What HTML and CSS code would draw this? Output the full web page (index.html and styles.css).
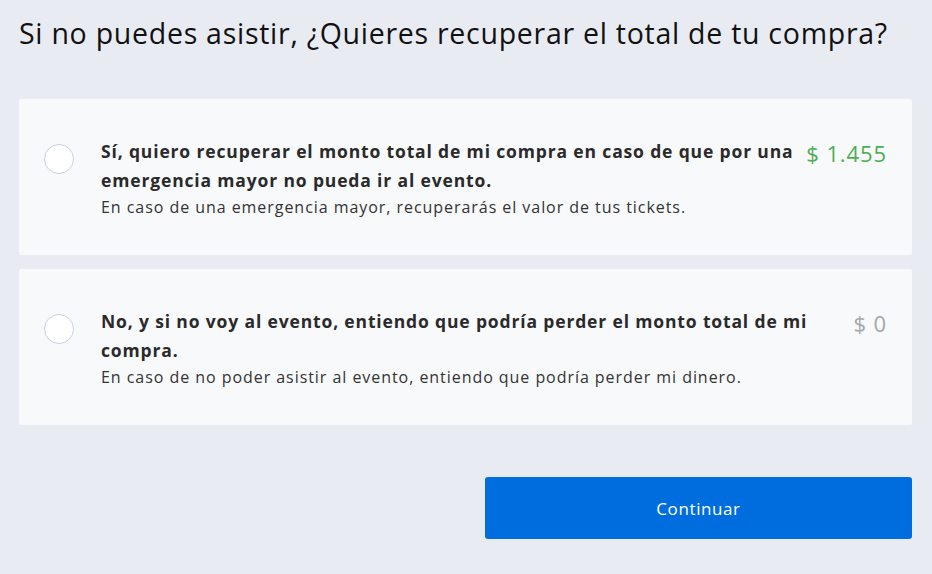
FILE: index.html
```html
<!DOCTYPE html>
<html lang="es">
<head>
<meta charset="utf-8">
<link rel="stylesheet" href="styles.css">
</head>
<body>
<main class="page">
  <h1 class="title">Si no puedes asistir, ¿Quieres recuperar el total de tu compra?</h1>
  <div class="options">
    <label class="option">
      <span class="radio"></span>
      <span class="texts">
        <span class="main">Sí, quiero recuperar el monto total de mi compra en caso de que por una emergencia mayor no pueda ir al evento.</span>
        <span class="sub">En caso de una emergencia mayor, recuperarás el valor de tus tickets.</span>
      </span>
      <span class="price green">$ 1.455</span>
    </label>
    <label class="option">
      <span class="radio"></span>
      <span class="texts">
        <span class="main">No, y si no voy al evento, entiendo que podría perder el monto total de mi compra.</span>
        <span class="sub">En caso de no poder asistir al evento, entiendo que podría perder mi dinero.</span>
      </span>
      <span class="price grey">$ 0</span>
    </label>
  </div>
  <div class="actions">
    <button class="btn">Continuar</button>
  </div>
</main>
</body>
</html>
```
FILE: styles.css
```css
html, body {
  margin: 0;
  padding: 0;
  background: #e8ebf2;
}
body {
  font-family: "Open Sans", "Noto Sans", sans-serif;
  color: #262626;
}
.page {
  padding: 13px 20px 0 19px;
}
.title {
  margin: 0 0 46px 0;
  font-size: 28.5px;
  font-weight: 400;
  line-height: 40px;
  color: #111;
  letter-spacing: 0.73px;
}
.options {
  display: flex;
  flex-direction: column;
  gap: 14px;
}
.option {
  display: flex;
  align-items: flex-start;
  background: #f8f9fb;
  height: 156px;
  box-sizing: border-box;
  padding: 38px 25px 0 25px;
  border-radius: 2px;
}
.radio {
  flex: none;
  width: 28px;
  height: 28px;
  border: 1px solid #c7d1e0;
  border-radius: 50%;
  background: #ffffff;
  margin-top: 7px;
  margin-right: 27px;
}
.texts {
  flex: 1;
  display: flex;
  flex-direction: column;
}
.main {
  font-size: 17.5px;
  font-weight: 700;
  line-height: 29px;
  color: #2a2a2a;
  letter-spacing: 0.85px;
}
.sub {
  font-size: 16px;
  line-height: 24px;
  color: #333;
  letter-spacing: 0.95px;
}
.price {
  flex: none;
  font-size: 22px;
  line-height: 32px;
  margin-left: 4px;
  letter-spacing: 0.9px;
}
.green { color: #4caf50; }
.grey { color: #a4a7ab; }
.actions {
  display: flex;
  justify-content: flex-end;
  margin-top: 52px;
}
.btn {
  width: 427px;
  height: 62px;
  border: none;
  border-radius: 3px;
  background: #006ddf;
  color: #ffffff;
  font-family: "Open Sans", "Noto Sans", sans-serif;
  font-size: 17px;
  letter-spacing: 0.6px;
}
```
